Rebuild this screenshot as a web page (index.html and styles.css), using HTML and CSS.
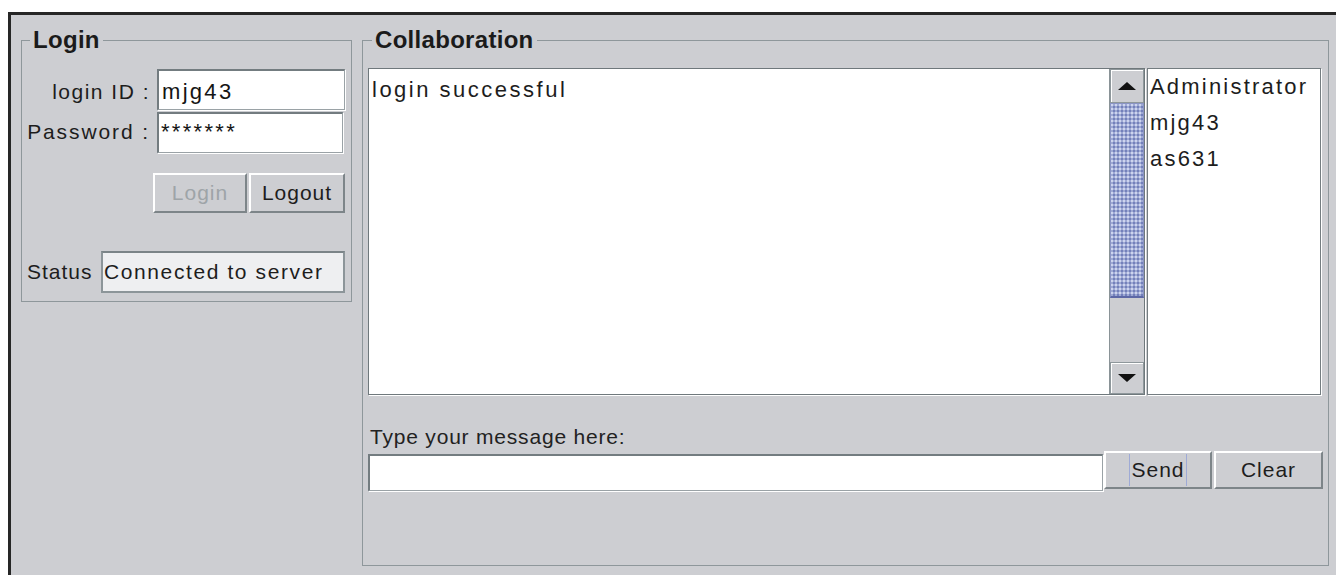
FILE: index.html
```html
<!DOCTYPE html>
<html lang="en">
<head>
<meta charset="utf-8">
<title>Collaboration Client</title>
<link rel="stylesheet" href="styles.css">
</head>
<body>
<div class="window">
  <fieldset class="panel login">
    <legend>Login</legend>
    <div class="row">
      <span class="label">login ID :</span>
      <div class="field id-field">mjg43</div>
    </div>
    <div class="row pw-row">
      <span class="label pw-label">Password :</span>
      <div class="field pw-field">*******</div>
    </div>
    <div class="btn-row">
      <button class="btn login-btn" disabled>Login</button>
      <button class="btn logout-btn">Logout</button>
    </div>
    <div class="status-row">
      <span class="label status-label">Status</span>
      <div class="status-box">Connected to server</div>
    </div>
  </fieldset>

  <fieldset class="panel collab">
    <legend>Collaboration</legend>
    <div class="chat-row">
      <div class="scrollpane">
        <div class="chat">login successful</div>
        <div class="scrollbar">
          <div class="sb-btn sb-up">
            <svg width="18" height="8" viewBox="0 0 18 8"><path d="M9 0 L18 8 L0 8 Z" fill="#111"/></svg>
          </div>
          <div class="thumb"></div>
          <div class="track"></div>
          <div class="sb-btn sb-down">
            <svg width="18" height="8" viewBox="0 0 18 8"><path d="M0 0 L18 0 L9 8 Z" fill="#111"/></svg>
          </div>
        </div>
      </div>
      <ul class="users">
        <li>Administrator</li>
        <li>mjg43</li>
        <li>as631</li>
      </ul>
    </div>
    <div class="prompt">Type your message here:</div>
    <div class="send-row">
      <div class="field msg-field"></div>
      <button class="btn send-btn"><span class="focus">Send</span></button>
      <button class="btn clear-btn">Clear</button>
    </div>
  </fieldset>
</div>
</body>
</html>
```

FILE: styles.css
```css
html, body {
  margin: 0;
  background: #ffffff;
}

body {
  font-family: "Liberation Sans", Arial, sans-serif;
  color: #1d1d1d;
}

/* application frame */
.window {
  box-sizing: border-box;
  margin: 12px 0 0 8px;
  height: calc(100vh - 12px);
  border-top: 3px solid #262626;
  border-left: 3px solid #262626;
  background: #cdced2;
  display: flex;
  align-items: flex-start;
  gap: 10px;
  padding: 13px 7px 9px 10px;
}

/* titled panels */
.panel {
  box-sizing: border-box;
  margin: 0;
  min-width: 0;
  border: 1px solid #8e979b;
}

.panel legend {
  font-weight: bold;
  font-size: 24px;
  line-height: 24px;
  letter-spacing: 0.3px;
  padding: 0 3px;
  color: #1b1b1b;
}

.login {
  width: 331px;
  padding: 17px 6px 8px 0;
}

.login legend {
  margin-left: 8px;
}

.collab {
  flex: 1;
  align-self: stretch;
  padding: 16px 7px 0 5px;
}

.collab legend {
  margin-left: 4px;
}

/* form rows */
.row {
  display: flex;
  justify-content: flex-end;
  align-items: baseline;
  gap: 7px;
}

.pw-row {
  margin-top: 2px;
}

.label {
  font-size: 21px;
  letter-spacing: 1.5px;
}

.pw-label {
  letter-spacing: 1.9px;
}

.field {
  box-sizing: border-box;
  background: #ffffff;
  border-top: 2px solid #737c80;
  border-left: 2px solid #737c80;
  border-right: 1px solid #9aa2a6;
  border-bottom: 1px solid #9aa2a6;
  box-shadow: 1px 1px 0 #ffffff;
  font-size: 22px;
  line-height: 26px;
  letter-spacing: 2.3px;
  padding-left: 2px;
  color: #151515;
}

.id-field {
  width: 188px;
  height: 41px;
  padding-top: 8px;
  padding-left: 3px;
}

.pw-field {
  width: 186px;
  height: 41px;
  padding-top: 5px;
  margin-right: 2px;
}

/* buttons */
.btn-row {
  display: flex;
  justify-content: flex-end;
  gap: 2px;
  margin-top: 20px;
}

.btn {
  box-sizing: border-box;
  height: 40px;
  padding: 0;
  background: #cdced2;
  border-style: solid;
  border-width: 2px;
  border-color: #ffffff #7d8589 #7d8589 #ffffff;
  font-family: "Liberation Sans", Arial, sans-serif;
  font-size: 21px;
  letter-spacing: 1px;
  color: #1d1d1d;
}

.login-btn {
  width: 94px;
}

.login-btn:disabled {
  color: #9ea4a8;
}

.logout-btn {
  width: 96px;
}

/* status */
.status-row {
  display: flex;
  justify-content: space-between;
  align-items: baseline;
  margin-top: 38px;
  padding-left: 5px;
}

.status-label {
  letter-spacing: 1px;
}

.status-box {
  box-sizing: border-box;
  width: 244px;
  height: 42px;
  background: #eeeff1;
  border: 2px solid #8c9599;
  border-top-color: #7b8488;
  font-size: 21px;
  line-height: 38px;
  letter-spacing: 1.6px;
  padding-left: 1px;
}

/* chat area */
.chat-row {
  display: flex;
  gap: 2px;
}

.scrollpane {
  box-sizing: border-box;
  flex: 1;
  height: 327px;
  display: flex;
  background: #ffffff;
  border: 1px solid #6f787c;
  box-shadow: 1px 1px 0 #ffffff;
}

.chat {
  flex: 1;
  padding: 8px 0 0 3px;
  font-size: 22px;
  line-height: 26px;
  letter-spacing: 2.5px;
}

.scrollbar {
  box-sizing: border-box;
  width: 35px;
  border-left: 1px solid #8a9397;
  background: #cdced2;
  display: flex;
  flex-direction: column;
}

.sb-btn {
  box-sizing: border-box;
  height: 34px;
  border: 1px solid #8e979b;
  box-shadow: inset 1px 1px 0 #ffffff;
  background: #cdced2;
  display: flex;
  align-items: center;
  justify-content: center;
}

.sb-down {
  height: 32px;
}

/* dotted Metal thumb */
.thumb {
  box-sizing: border-box;
  height: 195px;
  border: 1px solid #8a94c4;
  border-bottom: 2px solid #5d68a6;
  background-color: #9ea9d3;
  background-image:
    radial-gradient(circle, #7380bb 0.8px, transparent 1.3px),
    radial-gradient(circle, #cdd4ef 0.8px, transparent 1.3px);
  background-size: 4px 4px, 4px 4px;
  background-position: 1px 1px, 3px 3px;
}

.track {
  flex: 1;
  background: #cdced2;
}

.users {
  box-sizing: border-box;
  width: 174px;
  height: 327px;
  margin: 0;
  padding: 0 0 0 2px;
  list-style: none;
  background: #ffffff;
  border: 1px solid #737c80;
  box-shadow: 1px 1px 0 #ffffff;
  font-size: 22px;
  line-height: 36px;
  letter-spacing: 2.2px;
}

/* message entry */
.prompt {
  margin: 30px 0 0 2px;
  font-size: 21px;
  line-height: 24px;
  letter-spacing: 0.8px;
  color: #222222;
}

.send-row {
  display: flex;
  align-items: flex-start;
  margin: 2px -2px 0 0;
}

.msg-field {
  flex: 1;
  height: 37px;
  margin-top: 3px;
}

.send-btn {
  width: 108px;
  height: 38px;
  margin-left: 1px;
}

.clear-btn {
  width: 109px;
  height: 38px;
  margin-left: 2px;
}

.focus {
  display: inline-block;
  line-height: 32px;
  padding: 0 1px 0 1px;
  border-left: 1px solid #9eaad6;
  border-right: 1px solid #9eaad6;
}
```
